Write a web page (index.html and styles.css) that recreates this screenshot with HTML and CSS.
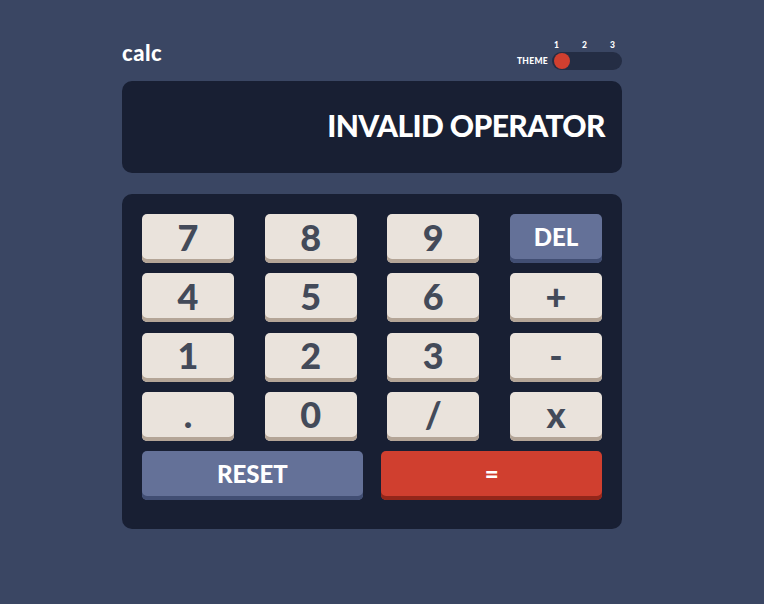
FILE: index.html
```html
<!DOCTYPE html>
<html lang="en">
<head>
<meta charset="utf-8">
<title>Calculator</title>
<link rel="stylesheet" href="styles.css">
</head>
<body>
<main class="app">
  <header class="header">
    <h1 class="logo">calc</h1>
    <div class="theme">
      <span class="theme-label">THEME</span>
      <div class="theme-switch">
        <div class="theme-nums"><span>1</span><span>2</span><span>3</span></div>
        <div class="track"><span class="knob"></span></div>
      </div>
    </div>
  </header>
  <section class="display">INVALID OPERATOR</section>
  <section class="keypad">
    <div class="grid">
      <button class="key">7</button>
      <button class="key">8</button>
      <button class="key">9</button>
      <button class="key key-blue">DEL</button>
      <button class="key">4</button>
      <button class="key">5</button>
      <button class="key">6</button>
      <button class="key">+</button>
      <button class="key">1</button>
      <button class="key">2</button>
      <button class="key">3</button>
      <button class="key">-</button>
      <button class="key">.</button>
      <button class="key">0</button>
      <button class="key">/</button>
      <button class="key">x</button>
    </div>
    <div class="bottom-row">
      <button class="key key-blue key-wide">RESET</button>
      <button class="key key-red key-wide">=</button>
    </div>
  </section>
</main>
</body>
</html>
```

FILE: styles.css
```css
* { box-sizing: border-box; }
html, body {
  margin: 0;
  padding: 0;
}
body {
  background: #3a4663;
  font-family: "Lato Black", "Lato", "Noto Sans", sans-serif;
  font-weight: 900;
  color: #ffffff;
  height: 604px;
  overflow: hidden;
}
.app {
  width: 500px;
  margin-left: 122px;
  padding-top: 40px;
}
.header {
  display: flex;
  justify-content: space-between;
  align-items: flex-end;
  height: 30px;
}
.logo {
  margin: 0;
  font-size: 22px;
  font-weight: 900;
  line-height: 22px;
  letter-spacing: 0.5px;
  padding-bottom: 6px;
}
.theme {
  display: flex;
  align-items: flex-end;
  gap: 4px;
}
.theme-label {
  font-size: 8.5px;
  font-weight: 900;
  letter-spacing: 0.3px;
  line-height: 8px;
  padding-bottom: 5px;
}
.theme-switch {
  display: flex;
  flex-direction: column;
  gap: 3px;
  width: 70px;
}
.theme-nums {
  display: flex;
  justify-content: space-between;
  padding: 0 7px 0 2px;
  font-size: 8.5px;
  font-weight: 900;
  line-height: 8px;
}
.track {
  height: 18px;
  border-radius: 9px;
  background: #242d44;
  padding: 1px 2px;
  display: flex;
  align-items: center;
}
.knob {
  width: 16px;
  height: 16px;
  border-radius: 50%;
  background: #d03f2f;
}
.display {
  margin-top: 11px;
  height: 92px;
  background: #181f33;
  border-radius: 10px;
  display: flex;
  align-items: center;
  justify-content: flex-end;
  padding: 0 17px 4px 0;
  font-size: 30px;
  font-weight: 900;
  letter-spacing: -0.6px;
}
.keypad {
  margin-top: 21px;
  background: #181f33;
  border-radius: 10px;
  padding: 20px 20px 29px;
  display: flex;
  flex-direction: column;
  gap: 10.25px;
}
.grid {
  display: grid;
  grid-template-columns: repeat(4, 92px);
  column-gap: 30.67px;
  row-gap: 10.25px;
}
.bottom-row {
  display: grid;
  grid-template-columns: 1fr 1fr;
  column-gap: 18.5px;
}
.key {
  height: 49px;
  border: none;
  border-radius: 5px;
  background: #eae3dc;
  box-shadow: inset 0 -4px 0 #b4a597;
  color: #434a59;
  font-family: inherit;
  font-weight: 900;
  font-size: 36px;
  line-height: 1;
  padding: 0 0 4px;
  display: flex;
  align-items: center;
  justify-content: center;
}
.key-blue {
  background: #647198;
  box-shadow: inset 0 -4px 0 #414e73;
  color: #ffffff;
  font-size: 24px;
}
.key-red {
  background: #d03f2f;
  box-shadow: inset 0 -4px 0 #93261a;
  color: #ffffff;
  font-size: 24px;
}
```
